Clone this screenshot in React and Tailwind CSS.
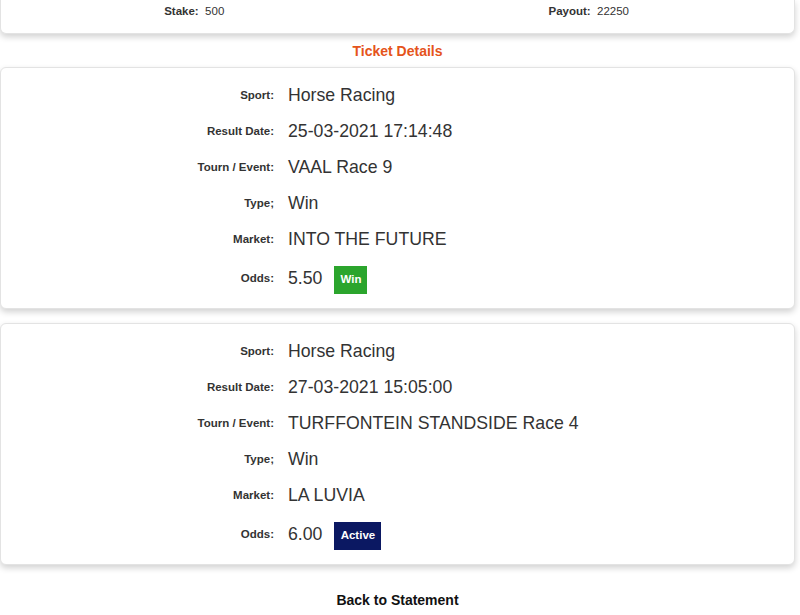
import React from 'react';

const tickets = [
    {
        sport: 'Horse Racing',
        date: '25-03-2021 17:14:48',
        event: 'VAAL Race 9',
        type: 'Win',
        market: 'INTO THE FUTURE',
        odds: '5.50',
        status: 'Win',
    },
    {
        sport: 'Horse Racing',
        date: '27-03-2021 15:05:00',
        event: 'TURFFONTEIN STANDSIDE Race 4',
        type: 'Win',
        market: 'LA LUVIA',
        odds: '6.00',
        status: 'Active',
    },
];

const Row = ({ label, children, last }) => (
    <div className={`flex items-center ${last ? 'h-[42px]' : 'h-9'}`}>
        <div className="w-[273px] text-right text-[11.5px] font-bold text-[#333]">{label}</div>
        <div className="pl-[14px] flex items-center text-[17.7px] text-[#333]">{children}</div>
    </div>
);

const TicketCard = ({ t }) => (
    <div className="mr-[5px] rounded-md border border-[#e3e3e3] bg-white pt-[9px] pb-[9px] shadow-[0_3px_6px_rgba(0,0,0,0.18)]">
        <Row label="Sport:">{t.sport}</Row>
        <Row label="Result Date:">{t.date}</Row>
        <Row label="Tourn / Event:">{t.event}</Row>
        <Row label="Type;">{t.type}</Row>
        <Row label="Market:">{t.market}</Row>
        <Row label="Odds:" last>
            <span>{t.odds}</span>
            {t.status === 'Win' ? (
                <span className="ml-3 mt-[3px] flex h-7 w-[33px] items-center justify-center bg-[#2ba52d] text-[11.5px] font-bold text-white">Win</span>
            ) : (
                <span className="ml-3 mt-[3px] flex h-7 w-[47px] items-center justify-center bg-[#0b1862] text-[11.5px] font-bold text-white">Active</span>
            )}
        </Row>
    </div>
);

const App = () => {
    return (
        <div className="min-h-[615px] bg-white font-['Liberation_Sans',Arial,sans-serif]">
            {/* summary card */}
            <div className="mr-[5px] grid grid-cols-2 rounded-b-md border border-t-0 border-[#e3e3e3] bg-white pt-[3px] pb-[13px] text-[11.5px] text-[#333] shadow-[0_3px_6px_rgba(0,0,0,0.18)]">
                <div className="pr-[10px] text-center"><span className="font-bold">Stake:</span>&nbsp; 500</div>
                <div className="pr-[14px] text-center"><span className="font-bold">Payout:</span>&nbsp; 22250</div>
            </div>

            <h3 className="mr-[5px] pt-[10px] pb-[8px] text-center text-[14px] leading-[15px] font-bold text-[#e5541b]">Ticket Details</h3>

            <div className="flex flex-col gap-[14px]">
                {tickets.map((t, i) => (
                    <TicketCard key={i} t={t} />
                ))}
            </div>

            <div className="mr-[5px] pt-[25px] text-center text-[14px] font-bold text-[#111]">Back to Statement</div>
        </div>
    );
};

export default App;
